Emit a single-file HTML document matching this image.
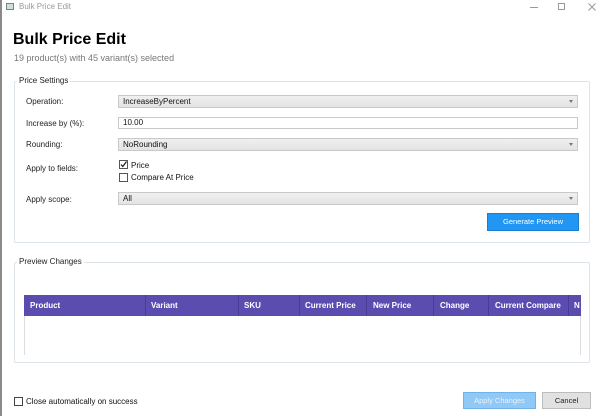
<!DOCTYPE html>
<html><head><style>
*{box-sizing:border-box;margin:0;padding:0}
body{width:600px;height:416px;background:#fff;font-family:"Liberation Sans",sans-serif;font-size:8px;color:#111;position:relative;overflow:hidden}
.a{position:absolute}
.lbl{position:absolute;left:26px;font-size:8px;color:#222}
.combo{position:absolute;left:118px;width:460px;height:13px;background:linear-gradient(#f0f0f0,#e3e3e3);border:1px solid #c9c9c9;font-size:8px;padding-left:4px;line-height:11px}
.combo:after{content:"";position:absolute;right:4px;top:4px;border-left:2px solid transparent;border-right:2px solid transparent;border-top:3px solid #777}
.group{position:absolute;left:14px;width:576px;border:1px solid #dde4ea;border-radius:2px}
.gt{position:absolute;background:#fff;padding:0 2px;font-size:8px;color:#222}
.cb{position:absolute;width:9px;height:9px;border:1px solid #555;background:#fff}
.hd{position:absolute;top:295px;height:21px;background:#5b4cb0;color:#fff;font-weight:bold;font-size:8px;line-height:22px}
.sep{position:absolute;top:295px;width:1px;height:21px;background:#4a3c96}
</style></head><body>
<div class="a" style="left:0;top:0;width:2px;height:416px;background:#8a8a8a"></div>
<div class="a" style="left:6px;top:3px;width:8px;height:7px;border:1px solid #6a8a8a;background:#cfe0dc"></div>
<div class="a" style="left:19px;top:2px;font-size:8px;color:#999">Bulk Price Edit</div>
<div class="a" style="left:530px;top:7px;width:8px;height:1px;background:#999"></div>
<div class="a" style="left:558px;top:3px;width:7px;height:7px;border:1px solid #999"></div>
<svg class="a" style="left:588px;top:3px" width="8" height="8"><path d="M0.5 0.5L7.5 7.5M7.5 0.5L0.5 7.5" stroke="#999" stroke-width="1"/></svg>
<div class="a" style="left:13px;top:31px;font-size:16px;font-weight:bold;color:#000">Bulk Price Edit</div>
<div class="a" style="left:14px;top:53px;font-size:9px;color:#777">19 product(s) with 45 variant(s) selected</div>

<div class="group" style="top:81px;height:162px"></div>
<div class="gt" style="left:17px;top:76px">Price Settings</div>
<div class="lbl" style="top:97px">Operation:</div>
<div class="combo" style="top:95px">IncreaseByPercent</div>
<div class="lbl" style="top:119px">Increase by (%):</div>
<div class="a" style="left:118px;top:117px;width:460px;height:12px;border:1px solid #c9c9c9;font-size:8px;padding-left:4px;line-height:10px">10.00</div>
<div class="lbl" style="top:140px">Rounding:</div>
<div class="combo" style="top:138px">NoRounding</div>
<div class="lbl" style="top:164px">Apply to fields:</div>
<div class="cb" style="left:119px;top:160px"></div>
<svg class="a" style="left:119px;top:160px" width="9" height="9"><path d="M2 4.5L3.8 6.5L7.5 1.5" stroke="#222" stroke-width="1.3" fill="none"/></svg>
<div class="a" style="left:131px;top:161px">Price</div>
<div class="cb" style="left:119px;top:173px"></div>
<div class="a" style="left:131px;top:173px">Compare At Price</div>
<div class="lbl" style="top:195px">Apply scope:</div>
<div class="combo" style="top:192px">All</div>
<div class="a" style="left:487px;top:213px;width:92px;height:18px;background:#2196f3;border:1px solid #1a7fd0;color:#fff;font-size:7.5px;text-align:center;line-height:16px">Generate Preview</div>

<div class="group" style="top:262px;height:101px"></div>
<div class="gt" style="left:17px;top:257px">Preview Changes</div>
<div class="a" style="left:24px;top:295px;width:557px;height:60px;border-left:1px solid #ddd;border-right:1px solid #ddd"></div>
<div class="hd" style="left:24px;width:557px"></div>
<div class="hd" style="left:30px">Product</div>
<div class="hd" style="left:151px">Variant</div>
<div class="hd" style="left:244px">SKU</div>
<div class="hd" style="left:305px">Current Price</div>
<div class="hd" style="left:373px">New Price</div>
<div class="hd" style="left:440px">Change</div>
<div class="hd" style="left:495px">Current Compare</div>
<div class="hd" style="left:574px;width:6px;overflow:hidden">N</div>
<div class="sep" style="left:145px"></div><div class="sep" style="left:238px"></div><div class="sep" style="left:299px"></div><div class="sep" style="left:366px"></div><div class="sep" style="left:433px"></div><div class="sep" style="left:488px"></div><div class="sep" style="left:568px"></div>

<div class="cb" style="left:14px;top:397px;border-color:#444"></div>
<div class="a" style="left:26px;top:397px">Close automatically on success</div>
<div class="a" style="left:463px;top:392px;width:73px;height:17px;background:#90c8f6;border:1px solid #6fb2ec;color:#e8f3fd;font-size:7.5px;text-align:center;line-height:16px">Apply Changes</div>
<div class="a" style="left:542px;top:392px;width:49px;height:17px;background:#e1e1e1;border:1px solid #bdbdbd;color:#222;font-size:7.5px;text-align:center;line-height:16px">Cancel</div>
</body></html>
